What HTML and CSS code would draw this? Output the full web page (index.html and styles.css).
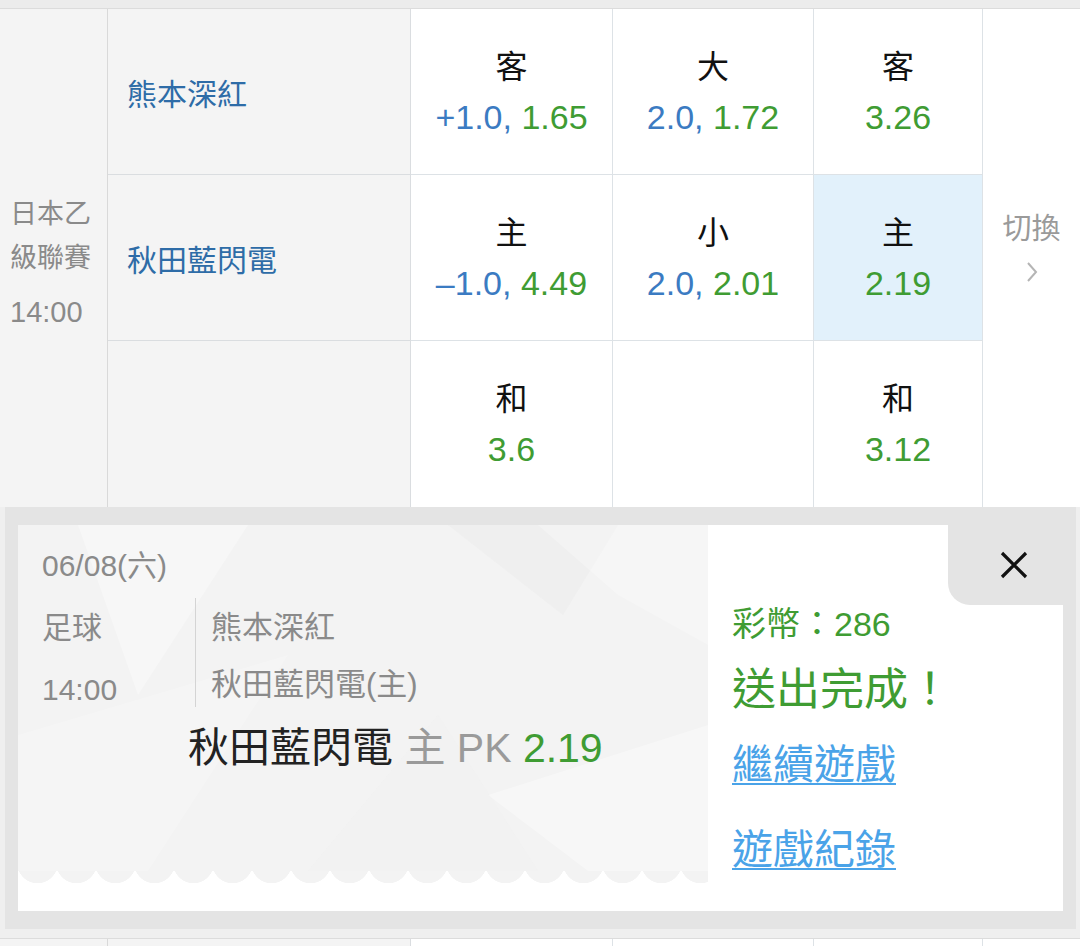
FILE: index.html
```html
<!DOCTYPE html>
<html lang="zh-Hant">
<head>
    <meta charset="UTF-8">
    <meta name="viewport" content="width=device-width, initial-scale=1.0">
    <title>賽事投注</title>
    <link rel="stylesheet" href="styles.css">
</head>
<body>

    <div class="strip"></div>
    <section class="match">
        <div class="league">
            <p>日本乙<br>級聯賽</p>
            <p class="kick">14:00</p>
        </div>
        <div class="team">熊本深紅</div>
        <div class="odd"><span class="lbl">客</span><span class="num"><em class="b">+1.0,</em> <em class="g">1.65</em></span></div>
        <div class="odd"><span class="lbl">大</span><span class="num"><em class="b">2.0,</em> <em class="g">1.72</em></span></div>
        <div class="odd"><span class="lbl">客</span><span class="num"><em class="g">3.26</em></span></div>
        <div class="switch">
            <span>切換</span>
            <svg width="12" height="22" viewBox="0 0 12 22"><polyline points="2,2 10,11 2,20" fill="none" stroke="#b5b5b5" stroke-width="2"/></svg>
        </div>

        <div class="team">秋田藍閃電</div>
        <div class="odd"><span class="lbl">主</span><span class="num"><em class="b">–1.0,</em> <em class="g">4.49</em></span></div>
        <div class="odd"><span class="lbl">小</span><span class="num"><em class="b">2.0,</em> <em class="g">2.01</em></span></div>
        <div class="odd on"><span class="lbl">主</span><span class="num"><em class="g">2.19</em></span></div>

        <div class="team last"></div>
        <div class="odd last"><span class="lbl">和</span><span class="num"><em class="g">3.6</em></span></div>
        <div class="odd last"></div>
        <div class="odd last"><span class="lbl">和</span><span class="num"><em class="g">3.12</em></span></div>
    </section>

    <section class="result">
        <div class="card">
            <div class="ticket">
                <svg class="ticket_bg" viewBox="0 0 690 346" preserveAspectRatio="none">
                    <polygon points="60,0 230,0 120,170" fill="#ffffff" opacity="0.35"/>
                    <polygon points="430,0 600,0 545,90" fill="#e9e9e9" opacity="0.35"/>
                    <polygon points="520,0 690,0 690,120 600,70" fill="#ffffff" opacity="0.25"/>
                    <polygon points="0,210 270,130 130,346 0,346" fill="#ffffff" opacity="0.2"/>
                    <polygon points="470,270 690,200 690,346 570,346" fill="#ffffff" opacity="0.35"/>
                    <polygon points="290,346 420,190 520,346" fill="#eeeeee" opacity="0.25"/>
                </svg>
                <p class="t_date">06/08(六)</p>
                <div class="t_info">
                    <div class="t_left">
                        <p>足球</p>
                        <p class="gap">14:00</p>
                    </div>
                    <div class="t_right">
                        <p>熊本深紅</p>
                        <p class="gap">秋田藍閃電(主)</p>
                    </div>
                </div>
                <p class="t_pick"><span class="dark">秋田藍閃電</span> 主 PK <span class="g">2.19</span></p>
            </div>
            <div class="side">
                <p class="coin">彩幣：286</p>
                <p class="done">送出完成！</p>
                <a href="#" class="link first">繼續遊戲</a>
                <a href="#" class="link">遊戲紀錄</a>
            </div>
            <button class="close">
                <svg width="30" height="30" viewBox="0 0 30 30"><path d="M3 3 L27 27 M27 3 L3 27" stroke="#111" stroke-width="3.2" fill="none"/></svg>
            </button>
        </div>
    </section>

    <div class="strip under"></div>
    <section class="match next">
        <div class="league"></div>
        <div class="team"></div>
        <div class="odd"></div>
        <div class="odd"></div>
        <div class="odd"></div>
        <div class="switch"></div>
    </section>

</body>
</html>
```

FILE: styles.css
```css
body, html{ margin:0; padding:0; width:1080px; height:946px; overflow:hidden; background:#fff;}
body{ font-family: "Liberation Sans", "Noto Sans CJK TC", sans-serif; }
p{ margin:0; }
em{ font-style:normal; }
button{ border:0; padding:0; background:transparent; }

.strip{ height:8px; background:#ececec; border-bottom:1px solid #dcdcdc; }
.strip.under{ height:9px; background:#efefef; }

.match{
    display:grid;
    grid-template-columns:108px 303px 202px 201px 169px 97px;
    grid-template-rows:repeat(3, 166px);
}
.match > div{ box-sizing:border-box; }

.league{
    grid-row:1 / 4;
    background:#f4f4f4; border-right:1px solid #d9d9d9;
    display:flex; flex-direction:column; justify-content:center;
    padding:10px 0 0 10px;
    font-size:27px; line-height:44px; color:#8a8a8a;
}
.league .kick{ font-size:29px; margin-top:10px; }

.team{
    background:#f4f4f4;
    border-right:1px solid #dadde0; border-bottom:1px solid #dadde0;
    display:flex; align-items:center;
    padding-left:19px;
    font-size:30px; color:#2e6ca7;
}
.team.last{ border-bottom:0; }

.odd{
    border-right:1px solid #dde2e6; border-bottom:1px solid #dde2e6;
    display:flex; flex-direction:column; justify-content:center; align-items:center;
}
.odd.last{ border-bottom:0; }
.odd.on{ background:#e2f1fb; }
.odd .lbl{ font-size:32px; line-height:50px; color:#111; }
.odd .num{ font-size:34px; line-height:50px; }
.b{ color:#3b7bc2; }
.g{ color:#3f9c33; }

.switch{
    grid-column:6; grid-row:1 / 4;
    display:flex; flex-direction:column; align-items:center; justify-content:center;
    padding-bottom:28px;
    font-size:29px; color:#9a9a9a;
}
.switch svg{ margin-top:14px; }

/* 送出結果 */
.result{
    background:#e4e4e4;
    padding:18px 13px 18px 13px;
    border-left:5px solid #efefef; border-right:4px solid #efefef;
}
.card{
    position:relative;
    display:flex; height:386px; background:#fff;
}
.ticket{
    position:relative;
    flex:0 0 690px; height:346px;
    background:#f3f3f3;
}
.ticket::after{
    content:''; position:absolute; left:0; right:0; top:100%; height:12px;
    background:radial-gradient(circle at 50% -8px, #f3f3f3 20px, transparent 20.5px) 0 0 / 39px 12px repeat-x;
}
.ticket_bg{ position:absolute; left:0; top:0; width:100%; height:100%; }
.ticket > p, .ticket > div{ position:relative; }

.t_date{
    padding:21px 0 0 24px;
    font-size:30px; line-height:40px; color:#8a8a8a;
}
.t_info{ display:flex; margin-top:12px; color:#8a8a8a; }
.t_left{ width:153px; padding:8px 0 0 24px; font-size:30px; line-height:44px; }
.t_left .gap{ margin-top:18px; }
.t_right{
    align-self:flex-start;
    border-left:1px solid #d4d4d4;
    padding:8px 0 0 15px; font-size:31px; line-height:44px;
}
.t_right .gap{ margin-top:13px; }
.t_pick{
    margin-top:10px; padding-left:170px;
    font-size:41px; line-height:52px; color:#9a9a9a;
}
.t_pick .dark{ color:#222; }

.side{
    flex:1;
    padding:79px 0 0 24px;
    display:flex; flex-direction:column; align-items:flex-start;
}
.coin{ font-size:34px; line-height:40px; color:#3f9c33; }
.done{ font-size:44px; line-height:56px; margin-top:18px; color:#3f9c33; }
.link{
    font-size:41px; line-height:50px; color:#4aa3e8;
    text-decoration:underline; text-decoration-thickness:2px; text-underline-offset:4px;
}
.link.first{ margin-top:22px; }
.link + .link{ margin-top:35px; }

.close{
    position:absolute; top:0; right:0;
    width:115px; height:80px; padding-left:16px; box-sizing:border-box;
    background:#e4e4e4; border-bottom-left-radius:22px;
    display:flex; align-items:center; justify-content:center;
}

.match.next{ grid-template-rows:60px; }
.match.next .league{ grid-row:auto; padding:0; }
.match.next .switch{ grid-row:auto; padding:0; }
.match.next .team, .match.next .odd{ border-bottom:0; }
```
